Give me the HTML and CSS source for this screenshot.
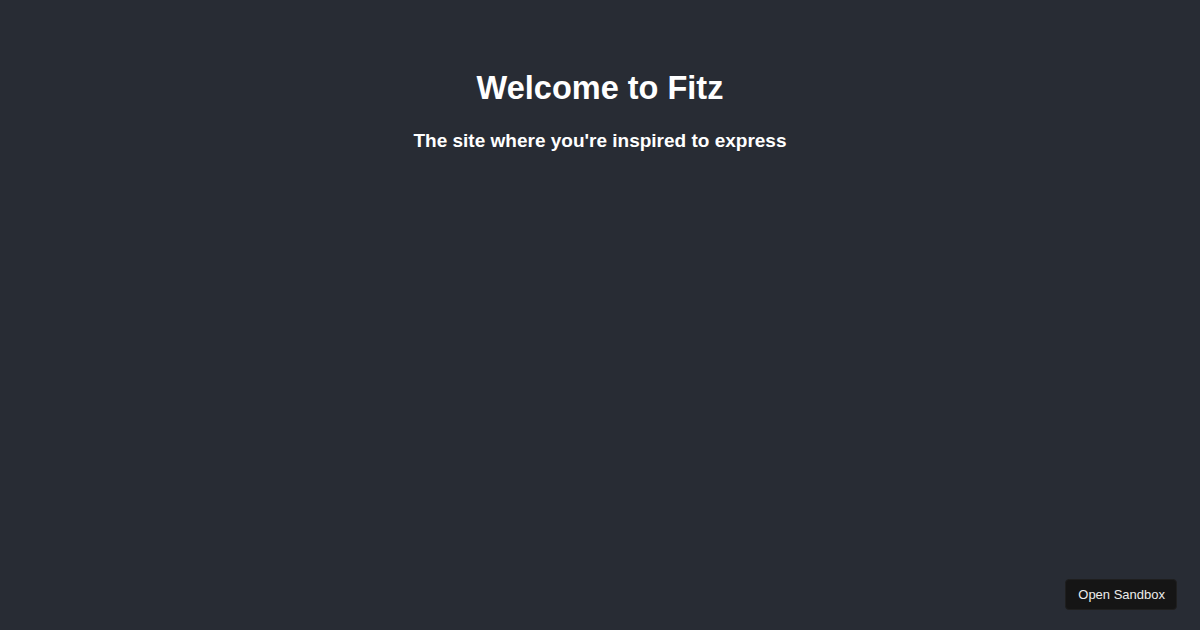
FILE: index.html
```html
<!DOCTYPE html>
<html lang="en">
<head>
    <meta charset="UTF-8">
    <meta name="viewport" content="width=device-width, initial-scale=1.0">
    <title>Fitz</title>
    <link rel="stylesheet" href="styles.css">
</head>
<body>
    <header class="intro">
        <h1>Welcome to Fitz</h1>
        <h3>The site where you're inspired to express</h3>
    </header>

    <a class="sandbox-btn" href="#">Open Sandbox</a>
</body>
</html>
```

FILE: styles.css
```css
body {
    font-family: 'Liberation Sans', Arial, sans-serif;
    background-color: #282c34;
    color: #fff;
    margin: 0;
    height: 100vh;
}

.intro {
    display: flex;
    flex-direction: column;
    align-items: center;
    padding-top: 70px;
}

.intro h1 {
    font-size: 32.5px;
    margin: 0 0 23px;
}

.intro h3 {
    font-size: 19px;
    margin: 0;
}

.sandbox-btn {
    position: fixed;
    right: 23px;
    bottom: 20px;
    background-color: #151515;
    color: #ececec;
    font-size: 13px;
    line-height: 15px;
    text-decoration: none;
    padding: 7px 11px 7px 12px;
    border-radius: 4px;
    border: 1px solid #1f1f1f;
}
```
